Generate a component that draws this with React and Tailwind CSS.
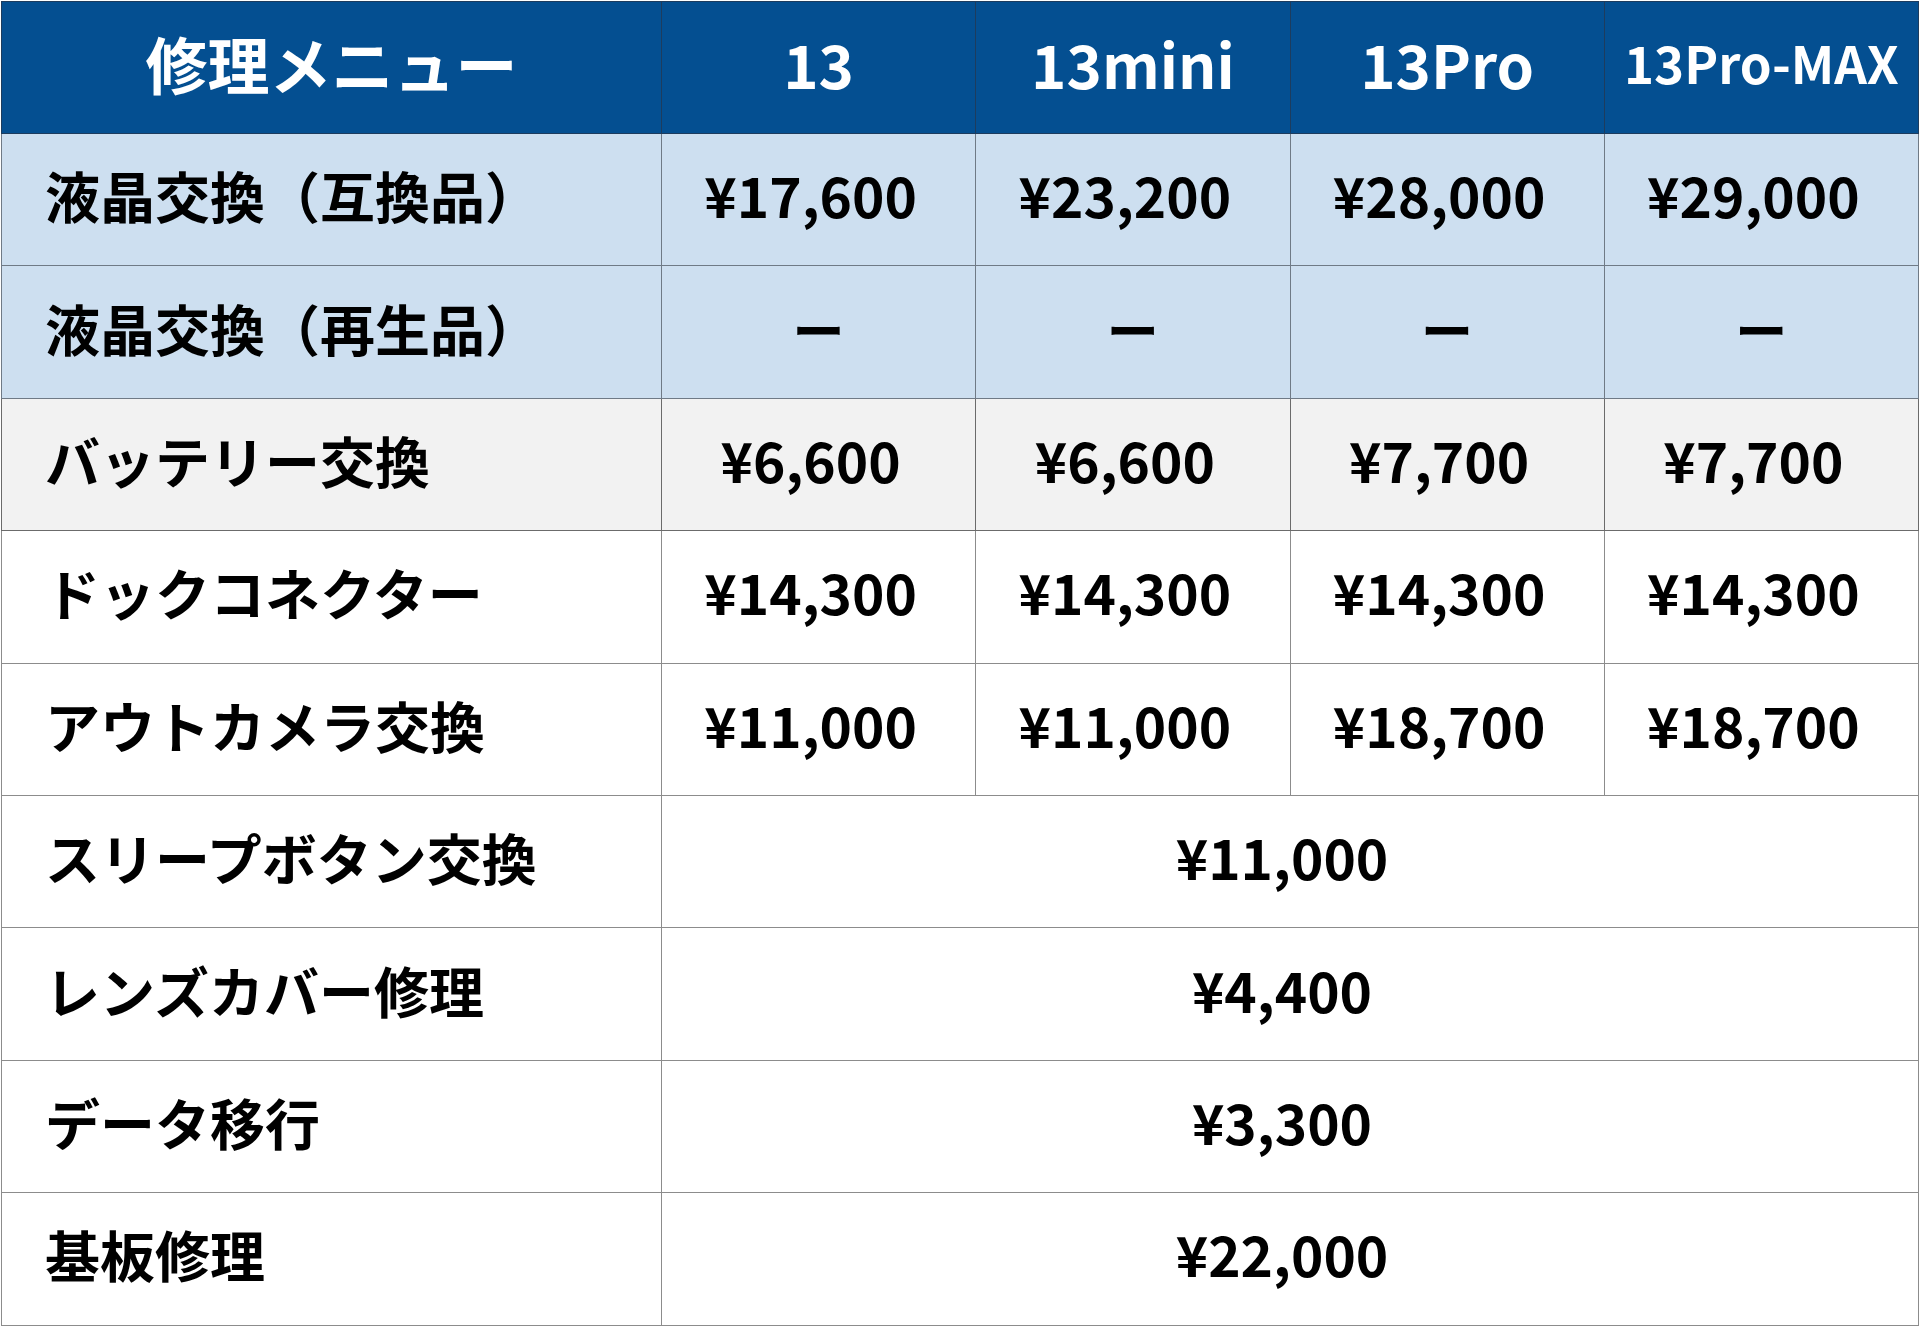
const models = ['13', '13mini', '13Pro', '13Pro-MAX'];

const rows = [
  { name: '液晶交換（互換品）', prices: ['¥17,600', '¥23,200', '¥28,000', '¥29,000'], tone: 'blue' },
  { name: '液晶交換（再生品）', prices: ['ー', 'ー', 'ー', 'ー'], tone: 'blue' },
  { name: 'バッテリー交換', prices: ['¥6,600', '¥6,600', '¥7,700', '¥7,700'], tone: 'gray' },
  { name: 'ドックコネクター', prices: ['¥14,300', '¥14,300', '¥14,300', '¥14,300'], tone: 'white' },
  { name: 'アウトカメラ交換', prices: ['¥11,000', '¥11,000', '¥18,700', '¥18,700'], tone: 'white' },
  { name: 'スリープボタン交換', price: '¥11,000' },
  { name: 'レンズカバー修理', price: '¥4,400' },
  { name: 'データ移行', price: '¥3,300' },
  { name: '基板修理', price: '¥22,000' },
];

const toneClass = {
  blue: 'bg-[#cddff0] border-[#6f7a86]',
  gray: 'bg-[#f2f2f2] border-[#6b6b6b]',
  white: 'bg-white border-[#8c8c8c]',
};

export default function App() {
  return (
    <div className="w-[1920px] bg-white p-px font-['Noto_Sans_CJK_JP',sans-serif] font-bold text-black">
      <table className="w-full table-fixed border-collapse border border-[#8c8c8c]">
        <colgroup>
          <col className="w-[660px]" />
          <col />
          <col />
          <col />
          <col />
        </colgroup>
        <thead>
          <tr className="h-[132px] bg-[#044f91] text-white">
            <th className="border border-[#1d3c5e] pb-[10px] text-center text-[62px] font-bold leading-none">修理メニュー</th>
            {models.map((m) => (
              <th
                key={m}
                className={`border border-[#1d3c5e] pb-[10px] text-center font-bold leading-none ${m.length > 6 ? 'text-[51px]' : 'text-[60px]'}`}
              >
                {m}
              </th>
            ))}
          </tr>
        </thead>
        <tbody>
          {rows.map((row) => {
            const tone = toneClass[row.tone || 'white'];
            return (
              <tr key={row.name} className="h-[132.4px]">
                <td className={`border pb-[10px] pl-[43px] text-left text-[55px] leading-none ${tone}`}>{row.name}</td>
                {row.prices ? (
                  row.prices.map((p, i) => (
                    <td key={i} className={`border pb-[10px] text-center text-[55px] leading-none ${tone}`}>
                      {p === 'ー' ? <span className="text-[52px]">ー</span> : <span className="pr-[16px]">{p}</span>}
                    </td>
                  ))
                ) : (
                  <td colSpan={4} className={`border pb-[10px] text-center text-[55px] leading-none ${tone}`}>
                    <span className="pr-[16px]">{row.price}</span>
                  </td>
                )}
              </tr>
            );
          })}
        </tbody>
      </table>
    </div>
  );
}
